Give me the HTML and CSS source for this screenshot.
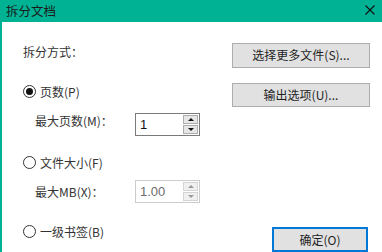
FILE: index.html
```html
<!DOCTYPE html>
<html lang="zh-CN">
<head>
    <meta charset="UTF-8">
    <title>拆分文档</title>
    <link rel="stylesheet" href="styles.css">
</head>
<body>
    <div class="dialog">
        <div class="titlebar">
            <span class="title">拆分文档</span>
            <svg class="close" width="10" height="10" viewBox="0 0 10 10">
                <path d="M0.5 0.5 L9.5 9.5 M9.5 0.5 L0.5 9.5" stroke="#111" stroke-width="1.1" fill="none"/>
            </svg>
        </div>

        <div class="content">
            <!-- 左侧：拆分方式 -->
            <div class="options">
                <div class="label">拆分方式：</div>

                <div class="radio-row r-pages">
                    <span class="radio checked"></span>
                    <span>页数(P)</span>
                </div>
                <div class="sub-row sub-pages">
                    <span class="sub-label">最大页数(M)：</span>
                    <div class="spin">
                        <span class="spin-value">1</span>
                        <div class="spin-btns">
                            <span class="spin-btn up"></span>
                            <span class="spin-btn down"></span>
                        </div>
                    </div>
                </div>

                <div class="radio-row r-size">
                    <span class="radio"></span>
                    <span>文件大小(F)</span>
                </div>
                <div class="sub-row sub-size">
                    <span class="sub-label">最大MB(X)：</span>
                    <div class="spin disabled">
                        <span class="spin-value">1.00</span>
                        <div class="spin-btns">
                            <span class="spin-btn up"></span>
                            <span class="spin-btn down"></span>
                        </div>
                    </div>
                </div>

                <div class="radio-row r-bookmark">
                    <span class="radio"></span>
                    <span>一级书签(B)</span>
                </div>
            </div>

            <!-- 右侧按钮 -->
            <div class="actions">
                <button class="btn">选择更多文件(S)...</button>
                <button class="btn btn-second">输出选项(U)...</button>
                <button class="btn btn-ok">确定(O)</button>
            </div>
        </div>
    </div>
</body>
</html>
```

FILE: styles.css
```css
* {
    box-sizing: border-box;
}

body {
    margin: 0;
    background: #fff;
    font-family: "Noto Sans CJK SC", "Noto Sans", sans-serif;
    font-size: 12px;
    color: #333;
}

.dialog {
    width: 382px;
    height: 252px;
    overflow: hidden;
}

.titlebar {
    height: 22px;
    background: #00b294;
    display: flex;
    align-items: center;
    justify-content: space-between;
    padding: 0 7px 0 6px;
}

.title {
    font-size: 12.5px;
    color: #1a1a1a;
    line-height: 16px;
}

.close {
    margin-top: -2px;
}

.content {
    height: 230px;
    border-left: 2px solid #00b294;
    display: flex;
}

.options {
    width: 230px;
    flex-shrink: 0;
    padding-left: 21px;
    display: flex;
    flex-direction: column;
}

.label {
    margin-top: 22px;
    line-height: 16px;
}

.radio-row {
    display: flex;
    align-items: center;
    gap: 4px;
    height: 16px;
}

.r-pages { margin-top: 23px; }
.r-size { margin-top: 18px; }
.r-bookmark { margin-top: 20px; }

.radio {
    width: 13px;
    height: 13px;
    border: 1px solid #333;
    border-radius: 50%;
    display: flex;
    align-items: center;
    justify-content: center;
}

.radio.checked::after {
    content: "";
    width: 7px;
    height: 7px;
    border-radius: 50%;
    background: #111;
}

.sub-row {
    display: flex;
    margin-left: 12px;
}

.sub-pages {
    margin-top: 14px;
    align-items: flex-start;
}

.sub-pages .sub-label {
    padding-top: 1px;
}

.sub-size {
    margin-top: 10px;
    align-items: center;
}

.sub-label {
    width: 100px;
    line-height: 14px;
}

.spin {
    width: 65px;
    height: 23px;
    border: 1px solid #7a7a7a;
    background: #fff;
    display: flex;
    align-items: center;
    justify-content: space-between;
    padding-left: 4px;
    padding-right: 1px;
}

.spin-value {
    font-family: "Liberation Sans", sans-serif;
    font-size: 13px;
    color: #111;
}

.spin.disabled {
    border-color: #cccccc;
}

.spin.disabled .spin-value {
    color: #6d6d6d;
}

.spin-btns {
    display: flex;
    flex-direction: column;
    gap: 1px;
}

.spin-btn {
    width: 15px;
    height: 9px;
    background: #e6e6e6;
    border: 1px solid #adadad;
    display: flex;
    align-items: center;
    justify-content: center;
}

.spin.disabled .spin-btn {
    background: #f0f0f0;
    border-color: #d4d4d4;
}

.spin-btn.up::after {
    content: "";
    border-left: 3px solid transparent;
    border-right: 3px solid transparent;
    border-bottom: 3px solid #111;
}

.spin-btn.down::after {
    content: "";
    border-left: 3px solid transparent;
    border-right: 3px solid transparent;
    border-top: 3px solid #111;
}

.spin.disabled .spin-btn.up::after { border-bottom-color: #999; }
.spin.disabled .spin-btn.down::after { border-top-color: #999; }

.actions {
    flex: 1;
    display: flex;
    flex-direction: column;
    align-items: flex-start;
    padding-top: 21px;
}

.btn {
    font-family: "Noto Sans CJK SC", "Liberation Sans", sans-serif;
    font-size: 12px;
    color: #1f1f1f;
    width: 138px;
    height: 25px;
    padding: 0;
    background: #e1e1e1;
    border: 1px solid #adadad;
    line-height: 16px;
}

.btn-second {
    margin-top: 15px;
}

.btn-ok {
    width: 96px;
    margin-left: 40px;
    margin-top: 120px;
    border: 2px solid #0078d7;
}
```
